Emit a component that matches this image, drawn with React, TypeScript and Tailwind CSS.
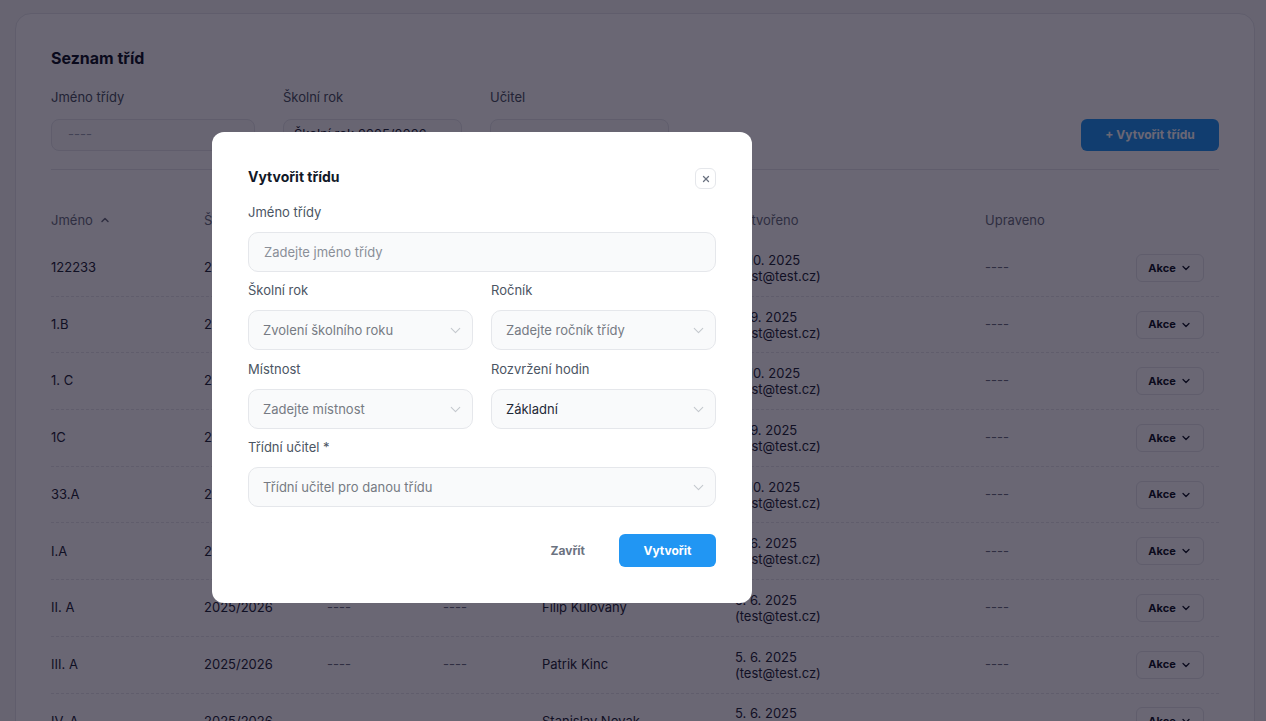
import React from "react";
import { ChevronDown, ChevronUp, X } from "lucide-react";

type Row = {
  name: string;
  year: string;
  grade: string;
  room: string;
  teacher: string;
  created: string;
};

const rows: Row[] = [
  { name: "122233", year: "2025/2026", grade: "----", room: "----", teacher: "Jan Novák", created: "1. 10. 2025" },
  { name: "1.B", year: "2025/2026", grade: "----", room: "----", teacher: "Petr Svoboda", created: "9. 9. 2025" },
  { name: "1. C", year: "2025/2026", grade: "----", room: "----", teacher: "Eva Malá", created: "1. 10. 2025" },
  { name: "1C", year: "2025/2026", grade: "----", room: "----", teacher: "Karel Dvořák", created: "9. 9. 2025" },
  { name: "33.A", year: "2025/2026", grade: "----", room: "----", teacher: "Jana Veselá", created: "1. 10. 2025" },
  { name: "I.A", year: "2025/2026", grade: "----", room: "----", teacher: "Tomáš Král", created: "5. 6. 2025" },
  { name: "II. A", year: "2025/2026", grade: "----", room: "----", teacher: "Filip Kulovaný", created: "5. 6. 2025" },
  { name: "III. A", year: "2025/2026", grade: "----", room: "----", teacher: "Patrik Kinc", created: "5. 6. 2025" },
  { name: "IV. A", year: "2025/2026", grade: "----", room: "----", teacher: "Stanislav Novak", created: "5. 6. 2025" },
];

const gridCols = "grid grid-cols-[153px_123px_116px_99px_193px_250px_1fr_auto]";

function Select({ text, filled }: { text: string; filled?: boolean }) {
  return (
    <div className="flex h-10 items-center justify-between rounded-[10px] border border-[#e5e7eb] bg-[#f9fafb] pl-3.5 pr-2">
      <span className={filled ? "pt-[2px] text-[13px] text-[#1f2937]" : "pt-[2px] text-[13px] text-[#767a83]"}>{text}</span>
      <ChevronDown size={17} strokeWidth={1.5} className="text-[#c4c8ce]" />
    </div>
  );
}

function Label({ children }: { children: React.ReactNode }) {
  return <div className="mb-2.5 text-[13px] leading-5 text-[#4b5563]">{children}</div>;
}

export default function App() {
  return (
    <div className="relative h-[721px] w-[1266px] overflow-hidden bg-[#f7f7f8] font-['Inter',sans-serif]">
      {/* Main card */}
      <div className="ml-[15px] mt-[13px] h-[760px] w-[1240px] rounded-2xl border border-[#e5e7eb] bg-white px-[35px] pt-8">
        <h1 className="text-[16px] font-bold leading-6 text-[#111827]">Seznam tříd</h1>

        <div className="mt-[17px] flex items-end">
          <div className="w-[204px]">
            <div className="mb-3 text-[13px] leading-5 text-[#4b5563]">Jméno třídy</div>
            <div className="flex h-8 items-center rounded-lg border border-[#e5e7eb] bg-[#f9fafb] px-4 text-[13px] text-[#9ca3af]">
              ----
            </div>
          </div>
          <div className="ml-7 w-[179px]">
            <div className="mb-3 text-[13px] leading-5 text-[#4b5563]">Školní rok</div>
            <div className="flex h-8 items-center rounded-lg border border-[#e5e7eb] bg-[#f9fafb] px-[10px] text-[13px] text-[#1f2937]">
              Školní rok 2025/2026
            </div>
          </div>
          <div className="ml-7 w-[179px]">
            <div className="mb-3 text-[13px] leading-5 text-[#4b5563]">Učitel</div>
            <div className="flex h-8 items-center rounded-lg border border-[#e5e7eb] bg-[#f9fafb] px-3 text-[13px] text-[#9ca3af]"></div>
          </div>
          <button className="ml-auto flex h-8 w-[138px] items-center justify-center rounded-md bg-[#2196f3] text-[12px] font-bold text-white">
            + Vytvořit třídu
          </button>
        </div>

        <div className="mt-[18px] border-t border-[#e5e7eb]" />

        {/* Table header */}
        <div className={`${gridCols} h-[70px] items-end pb-2.5 text-[13px] leading-5 text-[#6b7280]`}>
          <div className="flex items-center gap-1.5">
            Jméno <ChevronUp size={12} strokeWidth={3} className="text-[#6b7280]" />
          </div>
          <div>Školní rok</div>
          <div>Ročník</div>
          <div>Místnost</div>
          <div>Třídní učitel</div>
          <div>Vytvořeno</div>
          <div>Upraveno</div>
          <div className="w-[83px]" />
        </div>

        {rows.map((r, i) => (
          <div
            key={i}
            className={`${gridCols} h-[56.7px] items-center border-b border-dashed border-[#e5e7eb] text-[13px] text-[#1f2937]`}
          >
            <div>{r.name}</div>
            <div>{r.year}</div>
            <div className="text-[#6b7280]">{r.grade}</div>
            <div className="text-[#6b7280]">{r.room}</div>
            <div>{r.teacher}</div>
            <div className="leading-4">
              <div>{r.created}</div>
              <div>(test@test.cz)</div>
            </div>
            <div className="text-[#6b7280]">----</div>
            <div className="flex justify-end pr-[15px]">
              <button className="flex h-7 w-[68px] items-center justify-center gap-1 rounded-md border border-[#e5e7eb] bg-white text-[11px] font-bold text-[#111827]">
                Akce <ChevronDown size={12} strokeWidth={2.5} />
              </button>
            </div>
          </div>
        ))}
      </div>

      {/* Backdrop */}
      <div className="fixed inset-0 bg-[rgba(7,2,23,0.6)]" />

      {/* Modal */}
      <div className="fixed left-[212px] top-[132px] w-[540px] rounded-xl bg-white px-9 pb-9 pt-[33px]">
        <div className="flex h-6 items-center justify-between">
          <h2 className="text-[14px] font-bold leading-6 text-[#111827]">Vytvořit třídu</h2>
          <button className="mt-[3px] flex h-[21px] w-[21px] items-center justify-center rounded-md border border-[#e5e7eb] text-[#6b7280]">
            <X size={10} strokeWidth={3} />
          </button>
        </div>

        <div className="mt-[13px]">
          <Label>Jméno třídy</Label>
          <div className="flex h-10 items-center rounded-[10px] border border-[#e5e7eb] bg-[#f9fafb] pl-[15px] pt-[2px] text-[13px] text-[#8a8f98]">
            Zadejte jméno třídy
          </div>
        </div>

        <div className="mt-2 grid grid-cols-2 gap-x-[18px]">
          <div>
            <Label>Školní rok</Label>
            <Select text="Zvolení školního roku" />
          </div>
          <div>
            <Label>Ročník</Label>
            <Select text="Zadejte ročník třídy" />
          </div>
        </div>

        <div className="mt-[9px] grid grid-cols-2 gap-x-[18px]">
          <div>
            <Label>Místnost</Label>
            <Select text="Zadejte místnost" />
          </div>
          <div>
            <Label>Rozvržení hodin</Label>
            <Select text="Základní" filled />
          </div>
        </div>

        <div className="mt-2">
          <Label>Třídní učitel *</Label>
          <Select text="Třídní učitel pro danou třídu" />
        </div>

        <div className="mt-[27px] flex items-center justify-end gap-[34px]">
          <button className="text-[12px] font-bold text-[#6b7280]">Zavřít</button>
          <button className="flex h-[33px] w-[97px] items-center justify-center rounded-md bg-[#2196f3] text-[12px] font-bold text-white">
            Vytvořit
          </button>
        </div>
      </div>
    </div>
  );
}
